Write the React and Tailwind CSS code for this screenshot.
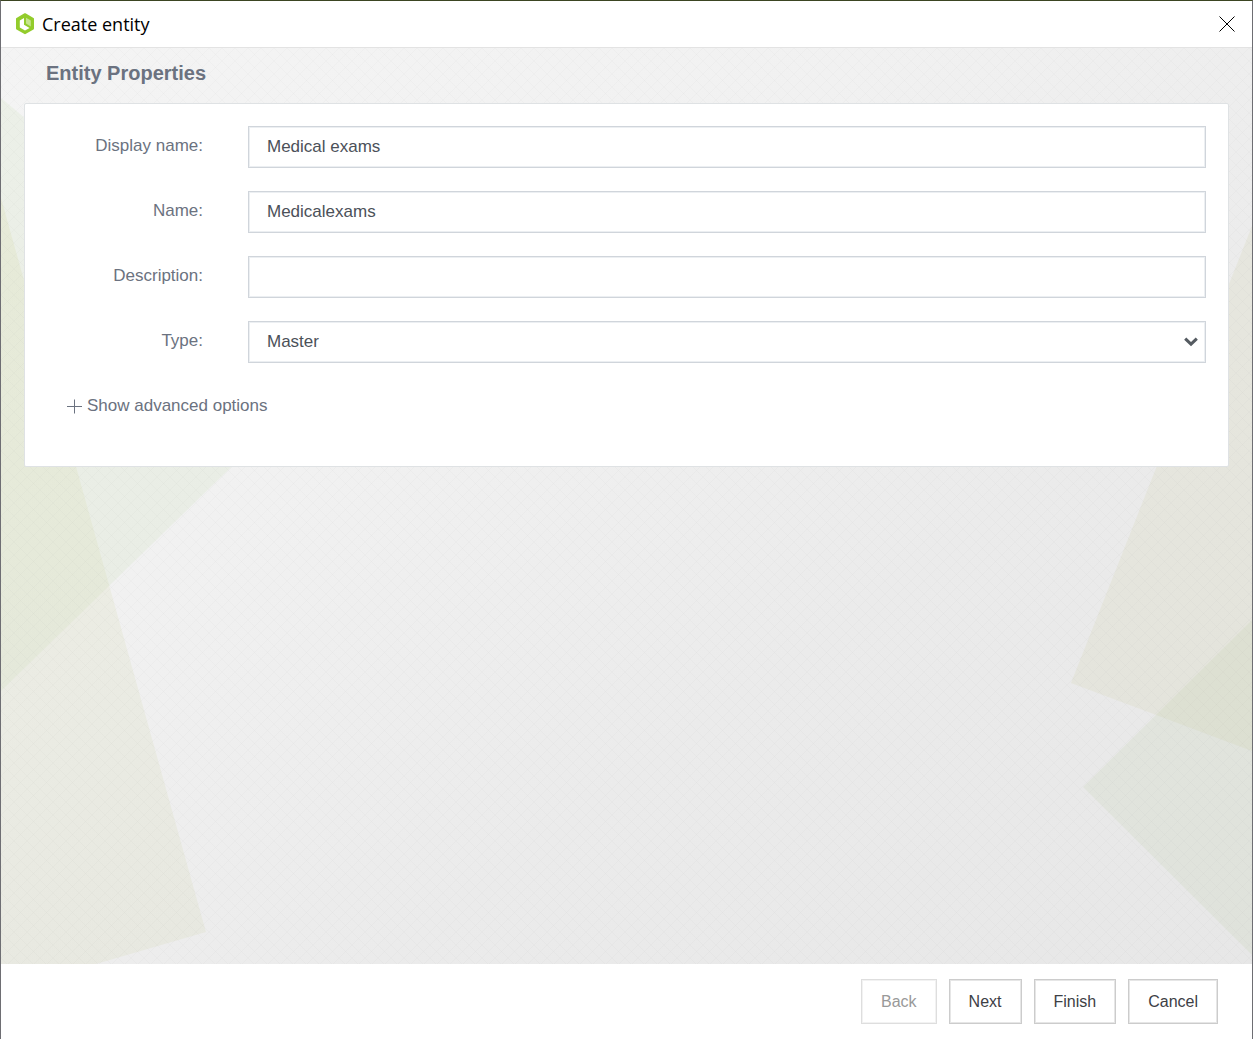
import { useState } from "react";

function Logo() {
    return (
        <svg viewBox="0 0 18 22" className="h-[22px] w-[18px]" aria-hidden="true">
            <path
                d="M9 1.2 L17 5.8 V15.6 L9 20.2 L1 15.6 V5.8 Z"
                fill="#93cc2c"
                stroke="#93cc2c"
                strokeWidth="2"
                strokeLinejoin="round"
            />
            <path d="M8 5 V11.8 L13.6 15 L9 17.4 L3.8 14.4 V7.4 Z" fill="#fff" />
            <path d="M10 4.8 L14.8 7.4 V13.4 L10 10.6 Z" fill="#c6e58e" />
        </svg>
    );
}

function Backdrop() {
    return (
        <svg
            viewBox="0 0 1251 916"
            preserveAspectRatio="none"
            className="absolute inset-0 h-full w-full"
            aria-hidden="true"
        >
            <defs>
                <linearGradient id="base" x1="0" y1="0" x2="1" y2="1">
                    <stop offset="0" stopColor="#f4f4f4" />
                    <stop offset="0.35" stopColor="#f1f1f1" />
                    <stop offset="0.65" stopColor="#ebebeb" />
                    <stop offset="1" stopColor="#e7e7e7" />
                </linearGradient>
                <linearGradient id="olive" x1="0" y1="0" x2="0" y2="1">
                    <stop offset="0" stopColor="#d2d69a" stopOpacity="0.2" />
                    <stop offset="0.4" stopColor="#d2d69a" stopOpacity="0.16" />
                    <stop offset="0.6" stopColor="#d2d6ae" stopOpacity="0.2" />
                    <stop offset="1" stopColor="#d2d6ae" stopOpacity="0.2" />
                </linearGradient>
                <pattern id="hatch" width="13" height="13" patternUnits="userSpaceOnUse">
                    <path d="M0 0 L13 13 M13 0 L0 13" stroke="#000" strokeOpacity="0.014" />
                </pattern>
            </defs>
            <rect width="1251" height="916" fill="url(#base)" />
            <path d="M0 50 L328 324 L0 643 Z" fill="#c8dcb4" fillOpacity="0.18" />
            <path d="M0 150 L205 884 L95 916 H0 Z" fill="url(#olive)" />
            <path d="M1251 178 L1070 635 L1251 703 Z" fill="#d0d4a8" fillOpacity="0.2" />
            <path d="M1251 572 L1082 739 L1251 907 Z" fill="#bccca4" fillOpacity="0.18" />
            <rect width="1251" height="916" fill="url(#hatch)" />
        </svg>
    );
}

function Field({ id, label, children }) {
    return (
        <div className="flex items-center gap-[45px]">
            <label htmlFor={id} className="w-[156px] shrink-0 pb-0.5 text-right text-[#6b7280]">
                {label}
            </label>
            {children}
        </div>
    );
}

const control =
    "h-[42px] w-full min-w-0 flex-1 appearance-none border border-[#d0d5db] bg-white px-[18px] text-[#4b5159] shadow-[inset_0_0_0_1px_#eceff2] outline-none";

function TextField({ id, label, value, onChange }) {
    return (
        <Field id={id} label={label}>
            <input
                id={id}
                type="text"
                value={value}
                onChange={(e) => onChange(e.target.value)}
                className={control}
            />
        </Field>
    );
}

function FooterButton({ disabled, children }) {
    return (
        <button
            type="button"
            disabled={disabled}
            className="h-[45px] border border-[#cccccc] bg-white px-[19px] text-[#3d4045] shadow-[inset_0_0_0_1px_#e6e6e6] disabled:border-[#dedede] disabled:text-[#999] disabled:shadow-[inset_0_0_0_1px_#f2f2f2]"
        >
            {children}
        </button>
    );
}

export default function App() {
    const [displayName, setDisplayName] = useState("Medical exams");
    const [name, setName] = useState("Medicalexams");
    const [description, setDescription] = useState("");
    const [type, setType] = useState("Master");

    return (
        <div className="flex min-h-screen flex-col border-x border-t border-x-[#6e6e73] border-t-[#3b4522] bg-white font-['Liberation_Sans',Arial,sans-serif] text-base">
            <header className="flex h-[46px] items-center gap-2 pr-[17px] pl-[15px]">
                <Logo />
                <h1 className="flex-1 font-['Open_Sans','Segoe_UI',sans-serif] text-lg text-black">
                    Create entity
                </h1>
                <button type="button" aria-label="Close" className="text-black">
                    <svg viewBox="0 0 16 16" className="size-4" aria-hidden="true">
                        <path d="M0.5 0.5 L15.5 15.5 M15.5 0.5 L0.5 15.5" stroke="currentColor" />
                    </svg>
                </button>
            </header>

            <main className="relative flex-1 border-t border-[#e3e3e3]">
                <Backdrop />
                <div className="relative px-[23px]">
                    <h2 className="px-[22px] pt-[11px] pb-4 text-xl font-bold text-[#6b7280]">
                        Entity Properties
                    </h2>
                    <form className="rounded-xs border border-[#dfe2e4] bg-white px-[22px] pt-[22px] pb-12 text-[17px] leading-6">
                        <div className="flex flex-col gap-[23px]">
                            <TextField
                                id="display-name"
                                label="Display name:"
                                value={displayName}
                                onChange={setDisplayName}
                            />
                            <TextField id="name" label="Name:" value={name} onChange={setName} />
                            <TextField
                                id="description"
                                label="Description:"
                                value={description}
                                onChange={setDescription}
                            />
                            <Field id="type" label="Type:">
                                <div className="relative min-w-0 flex-1">
                                    <select
                                        id="type"
                                        value={type}
                                        onChange={(e) => setType(e.target.value)}
                                        className={control}
                                    >
                                        <option>Master</option>
                                    </select>
                                    <svg
                                        viewBox="0 0 14 10"
                                        className="pointer-events-none absolute top-4 right-2 h-[10px] w-[14px]"
                                        aria-hidden="true"
                                    >
                                        <path
                                            d="M1.2 1.6 L7 7.2 L12.8 1.6"
                                            fill="none"
                                            stroke="#555b61"
                                            strokeWidth="3"
                                        />
                                    </svg>
                                </div>
                            </Field>
                        </div>
                        <button
                            type="button"
                            className="mt-[31px] ml-5 flex items-center gap-[5px] text-[#6b7280]"
                        >
                            <svg viewBox="0 0 15 15" className="size-[15px]" aria-hidden="true">
                                <path d="M7.5 0.5 V14.5 M0 7.5 H15" stroke="currentColor" />
                            </svg>
                            Show advanced options
                        </button>
                    </form>
                </div>
            </main>

            <footer className="flex h-[75px] items-center justify-end gap-3 pr-[34px]">
                <FooterButton disabled>Back</FooterButton>
                <FooterButton>Next</FooterButton>
                <FooterButton>Finish</FooterButton>
                <FooterButton>Cancel</FooterButton>
            </footer>
        </div>
    );
}
